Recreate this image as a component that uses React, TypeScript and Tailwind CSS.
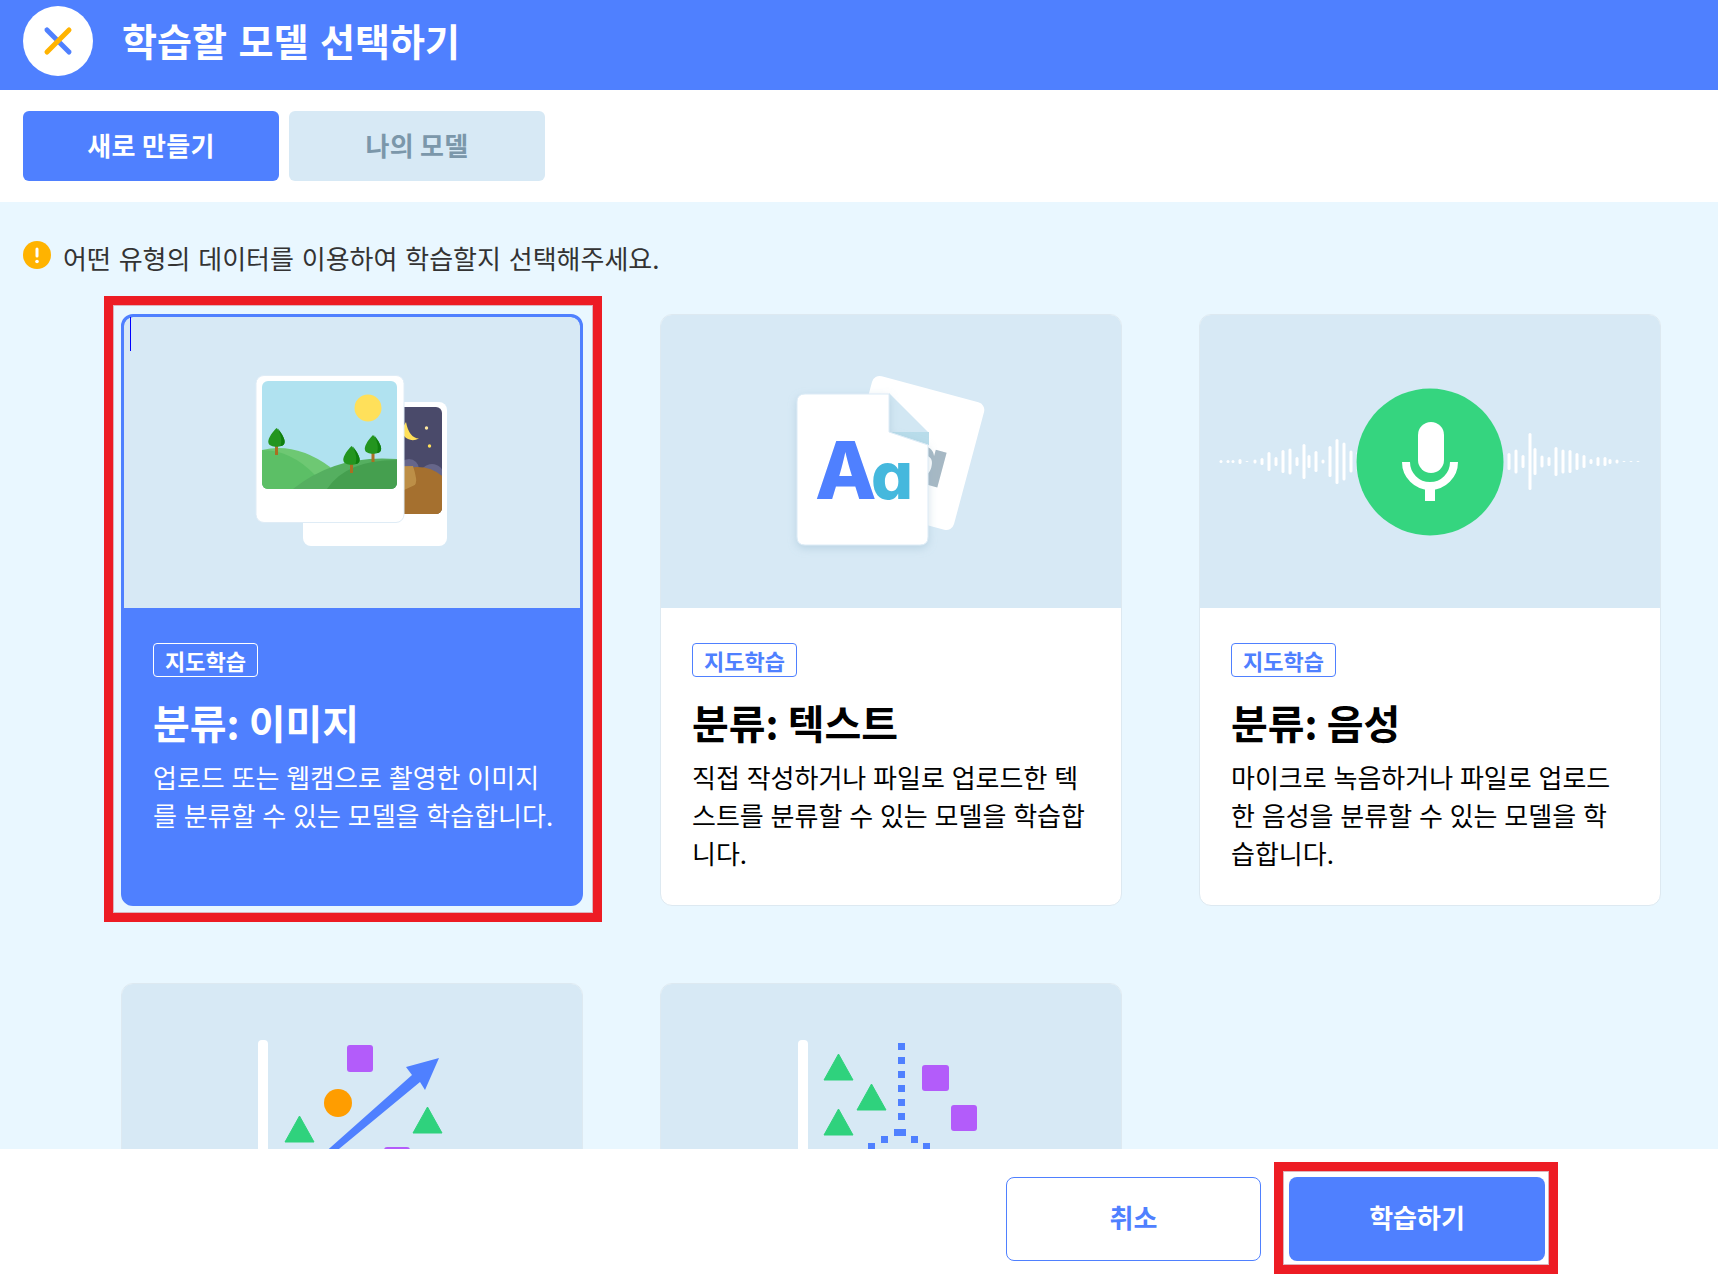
import type { ReactNode } from "react";

const BLUE = "#4f80ff";
const GREEN = "#2fd27d";
const PURPLE = "#b35cfa";

const LEFT_BARS = [
  [22, 3], [29, 3], [34, 3], [41, 5], [48, 1], [56, 4], [63, 7], [70, 19], [77, 9], [84, 23], [91, 26],
  [98, 9], [105, 35], [110, 13], [117, 21], [124, 4], [131, 31], [138, 45], [145, 38], [152, 22], [159, 20],
];
const RIGHT_BARS = [
  [310, 17], [317, 24], [324, 13], [331, 57], [336, 27], [343, 12], [350, 9], [357, 29], [364, 24], [371, 23],
  [378, 17], [385, 13], [392, 5], [399, 9], [406, 9], [411, 5], [418, 4], [425, 1], [432, 1], [439, 1],
];

function Tree({ x, y }: { x: number; y: number }) {
  return (
    <g>
      <rect x={x - 1.5} y={y + 14} width="3" height="13" fill="#a96f22" />
      <path d={`M${x} ${y} C${x - 6} ${y + 6} ${x - 9} ${y + 12} ${x - 8} ${y + 15} C${x - 7} ${y + 20} ${x + 7} ${y + 20} ${x + 8} ${y + 15} C${x + 9} ${y + 12} ${x + 6} ${y + 6} ${x} ${y} Z`} fill="#23951f" />
      <path d={`M${x + 1} ${y} C${x + 6} ${y + 6} ${x + 9} ${y + 12} ${x + 8} ${y + 15} C${x + 7} ${y + 18} ${x + 5} ${y + 18} ${x + 4} ${y + 18} C${x + 6} ${y + 12} ${x + 4} ${y + 6} ${x + 1} ${y} Z`} fill="#0f7f0f" />
    </g>
  );
}

function ImageArt() {
  return (
    <svg viewBox="3 3 456 291" className="w-full h-full">
      <rect x="182" y="88" width="144" height="144" rx="8" fill="#fff" />
      <clipPath id="night">
        <rect x="200" y="93" width="121" height="107" rx="6" />
      </clipPath>
      <g clipPath="url(#night)">
        <rect x="200" y="93" width="121" height="107" fill="#4a4a6a" />
        <circle cx="288" cy="155" r="10" fill="#66668a" />
        <circle cx="311" cy="162" r="12" fill="#66668a" />
        <path d="M250 200 V155 Q295 148 321 162 V200 Z" fill="#a5702f" />
        <path d="M250 200 V153 L292 152 Q294 158 295 164 Q297 175 283 177 V200 Z" fill="#bd8f47" />
        <path d="M283 176 L296 170 Q296 160 293 153 Q310 152 321 162 V200 H283 Z" fill="#a5702f" />
      </g>
      <path d="M285 108 Q277 120 287 125 Q292 127.5 298 124.5 Q288 124 285 108 Z" fill="#ffe05a" />
      <circle cx="305.5" cy="114" r="1.7" fill="#ffe9a0" />
      <circle cx="308.5" cy="132" r="1.7" fill="#ffe05a" />
      <rect x="135" y="61.5" width="148" height="147" rx="8" fill="#fff" stroke="#dfecf6" strokeWidth="1" />
      <clipPath id="photo">
        <rect x="141" y="67" width="135" height="108" rx="6" />
      </clipPath>
      <g clipPath="url(#photo)">
        <rect x="141" y="67" width="135" height="108" fill="#b0e2f0" />
        <circle cx="247" cy="94" r="13.5" fill="#ffe05a" />
        <path d="M141 136 Q175 128 209 153 L225 176 H141 Z" fill="#6ec873" />
        <path d="M141 136 Q170 136 194 161 L208 176 H141 Z" fill="#5cbf66" />
        <path d="M172 175 Q215 140 276 145 V176 H172 Z" fill="#55af60" />
        <path d="M206 175 Q225 146 276 146 V176 H206 Z" fill="#459f4f" />
      </g>
      <Tree x={155.5} y={114} />
      <Tree x={230.5} y={132} />
      <Tree x={252} y={121} />
    </svg>
  );
}

function TextArt() {
  return (
    <svg viewBox="1 1 460 293" className="w-full h-full">
      <defs>
        <filter id="docShadow" x="-20%" y="-20%" width="140%" height="140%">
          <feDropShadow dx="0" dy="3" stdDeviation="4" floodColor="#8fb2c8" floodOpacity="0.4" />
        </filter>
      </defs>
      <g transform="rotate(15 253 139)">
        <rect x="195" y="73" width="116" height="132" rx="8" fill="#fff" />
        <text x="247" y="166" fontFamily="Inter, sans-serif" fontWeight="800" fontSize="66" fill="#a6b8c4" className="[font-feature-settings:'cv11']">a</text>
      </g>
      <path d="M229 79 L269 119 V131 L229 118 Z" fill="#d2e7f3" />
      <path d="M229 118 L269 118 V131 Z" fill="#b8dcea" />
      <path d="M145 80 H229 V118 L268 131 V223 Q268 231 260 231 H145 Q137 231 137 223 V88 Q137 80 145 80 Z" fill="#fff" stroke="#dcebf6" strokeWidth="1" filter="url(#docShadow)" />
      <text x="155" y="185" fontFamily="Inter, sans-serif" fontWeight="800" fontSize="80" fill={BLUE}>A</text>
      <text x="211" y="185" fontFamily="Inter, sans-serif" fontWeight="800" fontSize="66" fill="#45b8dd" className="[font-feature-settings:'cv11']">a</text>
    </svg>
  );
}

function AudioArt() {
  return (
    <svg viewBox="1 1 460 293" className="w-full h-full">
      {[...LEFT_BARS, ...RIGHT_BARS].map(([x, h]) => (
        <rect key={x} x={x - 1.5} y={147.5 - h / 2} width="3" height={Math.max(h, 1)} rx="1.5" fill="#fff" />
      ))}
      <circle cx="231" cy="148" r="73.5" fill="#35d57f" />
      <rect x="219" y="108" width="26" height="51" rx="13" fill="#fff" />
      <path d="M207 148 A24 24 0 0 0 255 148" fill="none" stroke="#fff" strokeWidth="8" />
      <rect x="226" y="172" width="10" height="15" fill="#fff" />
    </svg>
  );
}

function Triangle({ x, y }: { x: number; y: number }) {
  return <path d={`M${x + 14.5} ${y} L${x + 29} ${y + 26} H${x} Z`} fill={GREEN} stroke={GREEN} strokeWidth="1" strokeLinejoin="round" />;
}

function RegressionArt() {
  return (
    <svg viewBox="1 1 460 293" className="w-full h-full">
      <rect x="137" y="57" width="10" height="237" rx="4" fill="#fff" />
      <rect x="226" y="62" width="26" height="27" rx="3" fill={PURPLE} />
      <circle cx="217" cy="120" r="14" fill="#ff9d00" />
      <Triangle x={164} y={133} />
      <Triangle x={292} y={124} />
      <rect x="263" y="164" width="26" height="27" rx="3" fill={PURPLE} />
      <path d="M318 75 L304 107 L299 99 L201 180 H192 L291 92 L285 84 Z" fill={BLUE} />
    </svg>
  );
}

function ClusterArt() {
  return (
    <svg viewBox="1 1 460 293" className="w-full h-full">
      <rect x="138" y="57" width="10" height="237" rx="4" fill="#fff" />
      <Triangle x={164} y={71} />
      <Triangle x={197} y={101} />
      <Triangle x={164} y={126} />
      <rect x="262" y="82" width="27" height="26" rx="3" fill={PURPLE} />
      <rect x="291" y="122" width="26" height="26" rx="3" fill={PURPLE} />
      {[60, 74, 88, 102, 116, 130].map((y) => (
        <rect key={y} x="238" y={y} width="7" height="7" fill={BLUE} />
      ))}
      <rect x="234" y="146" width="12" height="7" fill={BLUE} />
      <rect x="221" y="153" width="7" height="7" fill={BLUE} />
      <rect x="251" y="153" width="7" height="7" fill={BLUE} />
      <rect x="208" y="160" width="7" height="7" fill={BLUE} />
      <rect x="263" y="160" width="7" height="7" fill={BLUE} />
    </svg>
  );
}

function RedFrame({ className }: { className: string }) {
  return (
    <div className={`absolute border-[9px] border-[#ed1c24] pointer-events-none ${className}`}>
      <div className="w-full h-full border border-[#dcb4bc]" />
    </div>
  );
}

function ModelCard({ art, title, desc, selected }: { art: ReactNode; title?: string; desc?: string; selected?: boolean }) {
  return (
    <div className="relative w-[462px] h-[592px] shrink-0">
      <div
        className={`w-full h-full flex flex-col rounded-[12px] overflow-hidden border ${
          selected ? "border-[3px] border-[#4f80ff] bg-[#4f80ff] text-white" : "border-[#dde9f1] bg-white text-black"
        }`}
      >
        <div className={`shrink-0 bg-[#d7e9f5] ${selected ? "h-[291px] rounded-t-[9px]" : "h-[293px]"}`}>{art}</div>
        {title && (
          <div className={selected ? "pt-[35px] pl-[29px] pr-[22px]" : "pt-[35px] pl-[31px] pr-[30px]"}>
            <span
              className={`inline-flex items-center justify-center w-[105px] h-[34px] pb-[1px] rounded-[4px] border text-[22px] font-bold leading-none ${
                selected ? "border-white text-white" : "border-[#4f80ff] text-[#4f80ff]"
              }`}
            >
              지도학습
            </span>
            <h3 className="mt-[20px] text-[40px] leading-[50px] font-bold">{title}</h3>
            <p className="mt-[11px] text-[26px] leading-[38px] break-all [word-spacing:1px]">{desc}</p>
          </div>
        )}
      </div>
      {selected && (
        <>
          <div className="absolute left-[9px] top-[3px] w-px h-[34px] bg-[#0000ff]" />
          <RedFrame className="left-[-17px] top-[-18px] w-[498px] h-[626px]" />
        </>
      )}
    </div>
  );
}

export default function App() {
  return (
    <div className="h-[1280px] flex flex-col overflow-hidden bg-white font-['Noto_Sans_CJK_KR','Noto_Sans',sans-serif]">
      <header className="h-[90px] shrink-0 bg-[#4f80ff] flex items-start pt-[6px] pl-[23px] gap-[29px]">
        <div className="size-[70px] rounded-full bg-white grid place-items-center">
          <svg viewBox="0 0 30 30" className="size-[30px]">
            <path d="M4 4 L26 26" stroke={BLUE} strokeWidth="5" strokeLinecap="round" />
            <path d="M26 4 L4 26" stroke="#ffb300" strokeWidth="5" strokeLinecap="round" />
          </svg>
        </div>
        <h1 className="h-[70px] pb-[4px] flex items-center text-white text-[38px] font-bold [word-spacing:3px]">학습할 모델 선택하기</h1>
      </header>

      <nav className="h-[112px] shrink-0 flex items-center gap-[10px] pl-[23px]">
        <button className="w-[256px] h-[70px] pb-[4px] rounded-[6px] bg-[#4f80ff] text-white text-[26px] font-bold tracking-[0.3px]">새로 만들기</button>
        <button className="w-[256px] h-[70px] pb-[4px] rounded-[6px] bg-[#d7e9f5] text-[#7b97aa] text-[26px] font-bold tracking-[0.3px]">나의 모델</button>
      </nav>

      <main className="flex-1 min-h-0 overflow-hidden bg-[#e9f7ff] pt-[39px]">
        <div className="flex items-center gap-[12px] pl-[23px] h-[28px]">
          <svg viewBox="0 0 28 28" className="size-[28px] shrink-0">
            <circle cx="14" cy="14" r="14" fill="#ffb300" />
            <rect x="12.5" y="6.5" width="3" height="10" rx="1.5" fill="#fff" />
            <circle cx="14" cy="20.5" r="1.8" fill="#fff" />
          </svg>
          <p className="text-[26px] leading-[34px] text-[#333] mt-[6px] [word-spacing:2px]">어떤 유형의 데이터를 이용하여 학습할지 선택해주세요.</p>
        </div>
        <div className="mt-[45px] pl-[121px] flex flex-wrap gap-[77px]">
          <ModelCard art={<ImageArt />} title="분류: 이미지" desc="업로드 또는 웹캠으로 촬영한 이미지를 분류할 수 있는 모델을 학습합니다." selected />
          <ModelCard art={<TextArt />} title="분류: 텍스트" desc="직접 작성하거나 파일로 업로드한 텍스트를 분류할 수 있는 모델을 학습합니다." />
          <ModelCard art={<AudioArt />} title="분류: 음성" desc="마이크로 녹음하거나 파일로 업로드한 음성을 분류할 수 있는 모델을 학습합니다." />
          <ModelCard art={<RegressionArt />} />
          <ModelCard art={<ClusterArt />} />
        </div>
      </main>

      <footer className="h-[131px] shrink-0 bg-white flex justify-end gap-[28px] pt-[28px] pr-[173px]">
        <button className="w-[255px] h-[84px] pb-[6px] rounded-[8px] border border-[#4f80ff] bg-white text-[#4f80ff] text-[26px] font-bold">취소</button>
        <div className="relative">
          <button className="w-[256px] h-[84px] pb-[6px] rounded-[8px] bg-[#4f80ff] text-white text-[26px] font-bold">학습하기</button>
          <RedFrame className="left-[-15px] top-[-15px] w-[284px] h-[112px]" />
        </div>
      </footer>
    </div>
  );
}
